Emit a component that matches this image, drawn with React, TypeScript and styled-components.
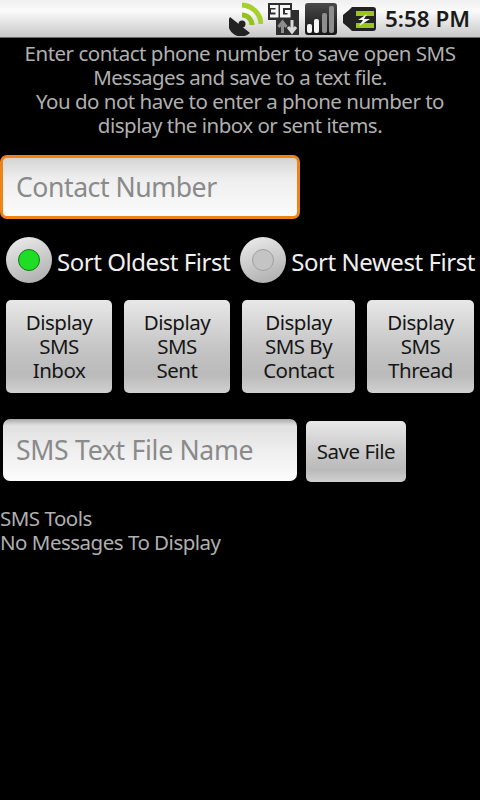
import React from "react";
import styled, { createGlobalStyle } from "styled-components";

const GlobalStyle = createGlobalStyle`
  html, body {
    margin: 0;
    padding: 0;
    background: #000;
  }
  * {
    box-sizing: border-box;
  }
`;

const Screen = styled.div`
  width: 480px;
  height: 800px;
  background: #000;
  overflow: hidden;
  font-family: "Noto Sans", "Open Sans", sans-serif;
  font-size: 20.5px;
  letter-spacing: -0.5px;
  line-height: 24px;
`;

const StatusBar = styled.div`
  height: 38px;
  padding: 0 10px 0 0;
  display: flex;
  align-items: center;
  justify-content: flex-end;
  background: linear-gradient(#f0f0f0, #fafafa 30%, #c8c8c8);
  border-bottom: 1px solid #6a6a6a;
`;

const StatusIcon = styled.svg<{ $gap: number }>`
  display: block;
  flex: none;
  margin-left: ${(p) => p.$gap}px;
`;

const Clock = styled.span`
  margin-left: 9px;
  color: #1a1a1a;
  font-size: 22.4px;
  font-weight: 600;
  letter-spacing: 0;
  line-height: 30px;
  white-space: nowrap;
`;

const Intro = styled.div`
  margin-top: 3px;
  text-align: center;
  color: #b0b0b0;
`;

const FocusField = styled.div`
  width: 300px;
  height: 64px;
  margin-top: 18px;
  padding-left: 13px;
  display: flex;
  align-items: center;
  border: 3px solid #ee8418;
  border-radius: 7px;
  background: linear-gradient(#d4d4d4, #eeeeee 35%, #fbfbfb);
  color: #8a8a8a;
  font-size: 26.6px;
  letter-spacing: -0.45px;
`;

const SortRow = styled.div`
  margin-top: 18px;
  padding-left: 6px;
  display: flex;
  align-items: center;
  height: 46px;
`;

const Radio = styled.div<{ $on: boolean }>`
  width: 46px;
  height: 46px;
  flex: none;
  border-radius: 50%;
  display: flex;
  align-items: center;
  justify-content: center;
  background: linear-gradient(160deg, #eeeeee, #b4b4b4 85%);
  &::after {
    content: "";
    width: 20px;
    height: 20px;
    border-radius: 50%;
    background: ${(p) => (p.$on ? "#1fdc24" : "#c4c4c4")};
    border: 1px solid ${(p) => (p.$on ? "#127a14" : "#a0a0a0")};
  }
`;

const RadioLabel = styled.span<{ $gap: number }>`
  margin: 4px ${(p) => p.$gap}px 0 5px;
  color: #f0f0f0;
  font-size: 24px;
  letter-spacing: -0.45px;
  white-space: nowrap;
`;

const ButtonRow = styled.div`
  margin-top: 17px;
  padding-left: 6px;
  display: flex;
  gap: 12px;
`;

const GrayButton = styled.div<{ $w: number }>`
  width: ${(p) => p.$w}px;
  height: 93px;
  flex: none;
  padding-bottom: 2px;
  border-radius: 5px;
  display: flex;
  align-items: center;
  justify-content: center;
  text-align: center;
  color: #161616;
  background: linear-gradient(#e8e8e8, #c6c6c6 50%, #bababa 80%, #d0d0d0);
`;

const FileRow = styled.div`
  margin-top: 26px;
  padding-left: 3px;
  display: flex;
  align-items: flex-start;
`;

const FileField = styled.div`
  width: 294px;
  height: 62px;
  padding-left: 13px;
  display: flex;
  align-items: center;
  border-radius: 7px;
  background: linear-gradient(#a8a8a8, #e0e0e0 10%, #eeeeee 50%, #fcfcfc);
  color: #8a8a8a;
  font-size: 26.6px;
  letter-spacing: -0.3px;
`;

const SaveButton = styled.div`
  width: 100px;
  height: 61px;
  margin: 2px 0 0 9px;
  padding-bottom: 2px;
  border-radius: 5px;
  display: flex;
  align-items: center;
  justify-content: center;
  color: #161616;
  background: linear-gradient(#e8e8e8, #c6c6c6 55%, #bababa 80%, #d0d0d0);
`;

const Output = styled.div`
  margin-top: 24px;
  color: #b0b0b0;
`;

const App: React.FC = () => {
  return (
    <Screen>
      <GlobalStyle />
      <StatusBar>
        <StatusIcon $gap={0} width="34" height="34" viewBox="0 0 34 34">
          <path d="M1 15 L21 31 A13 13 0 0 1 6 33 A13 13 0 0 1 1 15Z" fill="#222" />
          <circle cx="13" cy="22" r="3.5" fill="#222" />
          <path d="M13 13 A10 10 0 0 1 23 23" fill="none" stroke="#94c11f" strokeWidth="5" />
          <path d="M13 3 A20 20 0 0 1 32 22" fill="none" stroke="#a6d02c" strokeWidth="5" />
        </StatusIcon>
        <StatusIcon $gap={4} width="32" height="32" viewBox="0 0 32 32">
          <path d="M1 0 H25 V7 H32 V32 H9 V17 H1Z" fill="#2e2e2e" />
          <path d="M3 3.5 H10 V13 H3 M4 8 H10 M23 3.5 H14.5 V13 H22 V8.5 H18" fill="none" stroke="#f6f6f6" strokeWidth="3" />
          <path d="M15.5 30 V20 M11.5 24 L15.5 19 L19.5 24" fill="none" stroke="#8c8c8c" strokeWidth="3" />
          <path d="M25 17 V28 M21 24 L25 29 L29 24" fill="none" stroke="#d8d8d8" strokeWidth="3" />
        </StatusIcon>
        <StatusIcon $gap={6} width="32" height="32" viewBox="0 0 32 32">
          <defs>
            <linearGradient id="signalBg" x1="0" y1="0" x2="0" y2="1">
              <stop offset="0" stopColor="#4a4a4a" />
              <stop offset="1" stopColor="#141414" />
            </linearGradient>
          </defs>
          <rect width="32" height="32" rx="3" fill="url(#signalBg)" />
          <rect x="2" y="21" width="5" height="9" rx="2" fill="#f6f6f6" />
          <rect x="9" y="16" width="5" height="14" rx="2" fill="#f6f6f6" />
          <rect x="17" y="10" width="5" height="20" rx="2" fill="#8e8e8e" />
          <rect x="24" y="3" width="5" height="27" rx="2" fill="#8e8e8e" />
        </StatusIcon>
        <StatusIcon $gap={6} width="33" height="26" viewBox="0 0 33 26">
          <path d="M0 9 L6 4 L9 1 H30 A3 3 0 0 1 33 4 V22 A3 3 0 0 1 30 25 H9 L6 22 L0 17Z" fill="#222" />
          <rect x="13" y="5" width="18" height="5" fill="#9cc41f" />
          <rect x="13" y="17" width="18" height="5" fill="#9cc41f" />
          <path d="M24 8 L15 14 H20 L16 20 L27 13 H21Z" fill="#f6f6f6" />
        </StatusIcon>
        <Clock>5:58 PM</Clock>
      </StatusBar>
      <Intro>
        Enter contact phone number to save open SMS
        <br />
        Messages and save to a text file.
        <br />
        You do not have to enter a phone number to
        <br />
        display the inbox or sent items.
      </Intro>
      <FocusField>Contact Number</FocusField>
      <SortRow>
        <Radio $on />
        <RadioLabel $gap={10}>Sort Oldest First</RadioLabel>
        <Radio $on={false} />
        <RadioLabel $gap={0}>Sort Newest First</RadioLabel>
      </SortRow>
      <ButtonRow>
        <GrayButton $w={106}>
          Display
          <br />
          SMS
          <br />
          Inbox
        </GrayButton>
        <GrayButton $w={106}>
          Display
          <br />
          SMS
          <br />
          Sent
        </GrayButton>
        <GrayButton $w={113}>
          Display
          <br />
          SMS By
          <br />
          Contact
        </GrayButton>
        <GrayButton $w={107}>
          Display
          <br />
          SMS
          <br />
          Thread
        </GrayButton>
      </ButtonRow>
      <FileRow>
        <FileField>SMS Text File Name</FileField>
        <SaveButton>Save File</SaveButton>
      </FileRow>
      <Output>
        SMS Tools
        <br />
        No Messages To Display
      </Output>
    </Screen>
  );
};

export default App;
